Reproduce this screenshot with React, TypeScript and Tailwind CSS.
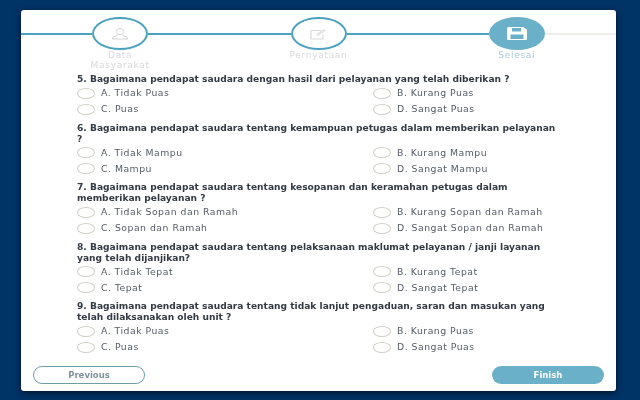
import React from "react";

type Question = {
  text: string;
  options: string[];
};

const questions: Question[] = [
  {
    text: "5. Bagaimana pendapat saudara dengan hasil dari pelayanan yang telah diberikan ?",
    options: ["A. Tidak Puas", "B. Kurang Puas", "C. Puas", "D. Sangat Puas"],
  },
  {
    text: "6. Bagaimana pendapat saudara tentang kemampuan petugas dalam memberikan pelayanan ?",
    options: ["A. Tidak Mampu", "B. Kurang Mampu", "C. Mampu", "D. Sangat Mampu"],
  },
  {
    text: "7. Bagaimana pendapat saudara tentang kesopanan dan keramahan petugas dalam memberikan pelayanan ?",
    options: ["A. Tidak Sopan dan Ramah", "B. Kurang Sopan dan Ramah", "C. Sopan dan Ramah", "D. Sangat Sopan dan Ramah"],
  },
  {
    text: "8. Bagaimana pendapat saudara tentang pelaksanaan maklumat pelayanan / janji layanan yang telah dijanjikan?",
    options: ["A. Tidak Tepat", "B. Kurang Tepat", "C. Tepat", "D. Sangat Tepat"],
  },
  {
    text: "9. Bagaimana pendapat saudara tentang tidak lanjut pengaduan, saran dan masukan yang telah dilaksanakan oleh unit ?",
    options: ["A. Tidak Puas", "B. Kurang Puas", "C. Puas", "D. Sangat Puas"],
  },
];

function UserIcon() {
  return (
    <svg width="18" height="12" viewBox="0 0 18 12" fill="none" stroke="#d6d6d6" strokeWidth="1">
      <ellipse cx="9" cy="3.6" rx="3.6" ry="3" />
      <path d="M6.8 6.4 C6.6 7.8 1.4 8.2 1 11 H17 C16.6 8.2 11.4 7.8 11.2 6.4" />
    </svg>
  );
}

function EditIcon() {
  return (
    <svg width="18" height="12" viewBox="0 0 18 12" fill="none" stroke="#d9d9d9" strokeWidth="1.2">
      <path d="M11 2.5 H1 V11 H13 V6.5" />
      <path d="M6 8 L7 5.5 L13.5 1 L16 2.5 L9 7.5 Z" fill="#e4e4e4" stroke="none" />
    </svg>
  );
}

function SaveIcon() {
  return (
    <svg width="20" height="13" viewBox="0 0 20 13">
      <path
        fillRule="evenodd"
        fill="#ffffff"
        d="M1.5 0 H16 L20 2.5 V11.5 Q20 13 18.5 13 H1.5 Q0 13 0 11.5 V1.5 Q0 0 1.5 0 Z M5 1 V4.5 H14 V1 Z M3.5 7.5 V12 H16.5 V7.5 Z"
      />
    </svg>
  );
}

function Step({
  label,
  icon,
  active,
  leftColor,
  rightColor,
}: {
  label: React.ReactNode;
  icon: React.ReactNode;
  active?: boolean;
  leftColor: string;
  rightColor: string;
}) {
  return (
    <div className="flex flex-1 flex-col items-center">
      <div className="flex w-full items-center">
        <div className={`h-[2px] flex-1 ${leftColor}`} />
        <div
          className={
            active
              ? "flex h-[33px] w-[56px] items-center justify-center rounded-[50%] bg-[#69b0c8]"
              : "flex h-[33px] w-[56px] items-center justify-center rounded-[50%] border-2 border-[#4ba2c0] bg-white"
          }
        >
          {icon}
        </div>
        <div className={`h-[2px] flex-1 ${rightColor}`} />
      </div>
      <div
        className={
          active
            ? "text-center text-[9px] leading-[10px] tracking-[0.7px] text-[#a9cbdb]"
            : "text-center text-[9px] leading-[10px] tracking-[0.7px] text-[#d9d9d9]"
        }
      >
        {label}
      </div>
    </div>
  );
}

function Option({ label }: { label: string }) {
  return (
    <div className="flex h-[16px] items-center">
      <div className="h-[11px] w-[18px] rounded-[50%] border border-[#cfcfc8] bg-white" />
      <span className="ml-[6px] text-[9.3px] tracking-[0.5px] text-[#555b66]">{label}</span>
    </div>
  );
}

export default function App() {
  return (
    <div
      className="h-[400px] w-[640px] overflow-hidden bg-[#003366] pl-[21px] pt-[10px]"
      style={{ fontFamily: '"DejaVu Sans", sans-serif' }}
    >
      <div className="flex h-[381px] w-[595px] flex-col rounded-[3px] bg-white pt-[7px] shadow-[0_2px_6px_rgba(0,0,0,0.6)] blur-[0.35px]">
        <div className="flex h-[55px]">
          <Step
            label={
              <>
                Data
                <br />
                Masyarakat
              </>
            }
            icon={<UserIcon />}
            leftColor="bg-[#4ba2c0]"
            rightColor="bg-[#4ba2c0]"
          />
          <Step label="Pernyataan" icon={<EditIcon />} leftColor="bg-[#4ba2c0]" rightColor="bg-[#4ba2c0]" />
          <Step label="Selesai" icon={<SaveIcon />} active leftColor="bg-[#4ba2c0]" rightColor="bg-[#eeeeea]" />
        </div>

        <div className="flex flex-col gap-[5.5px] pl-[56px] pr-[55px] pt-[2px]">
          {questions.map((q) => (
            <div key={q.text}>
              <p className="text-[9.1px] font-bold leading-[11px] text-[#333a44]">{q.text}</p>
              <div className="grid grid-cols-[296px_1fr]">
                {q.options.map((o) => (
                  <Option key={o} label={o} />
                ))}
              </div>
            </div>
          ))}
        </div>

        <div className="mt-auto flex justify-between px-[12px] pb-[7px]">
          <button className="h-[18px] w-[112px] rounded-full border border-[#6d9ea8] bg-white text-[8.5px] font-bold text-[#7f939c]">
            Previous
          </button>
          <button className="h-[18px] w-[112px] rounded-full bg-[#69b0c8] text-[8.5px] font-bold text-white">
            Finish
          </button>
        </div>
      </div>
    </div>
  );
}
